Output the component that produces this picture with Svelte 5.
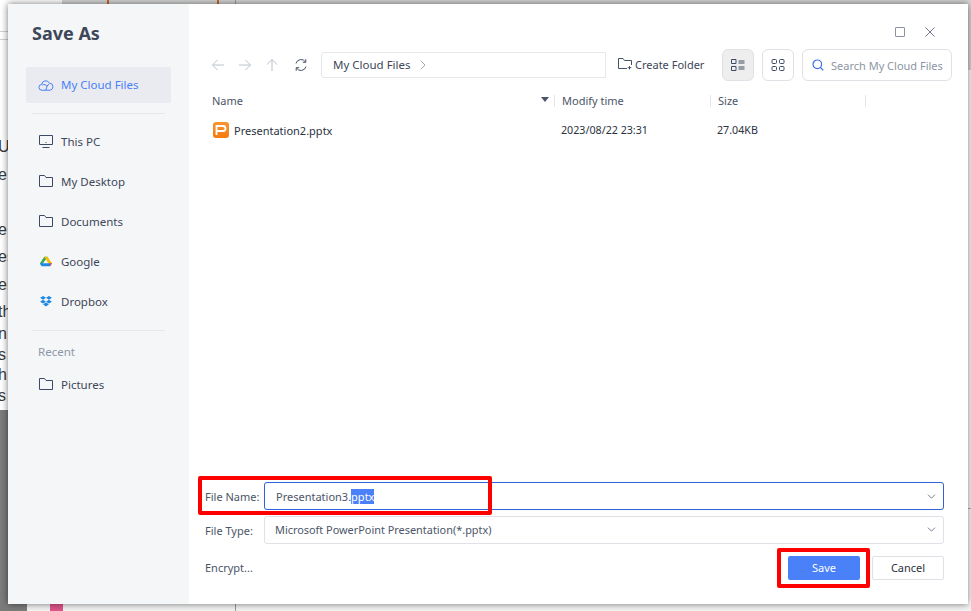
<script lang="ts">
    const behindLines = [
        { text: "Up", top: 138 },
        { text: "e", top: 166 },
        { text: "e", top: 221 },
        { text: "es", top: 248 },
        { text: "en", top: 276 },
        { text: "th", top: 303 },
        { text: "n.", top: 325 },
        { text: "s", top: 346 },
        { text: "h", top: 366 },
        { text: "s", top: 387 }
    ];

    const places = [
        { name: "This PC", icon: "pc" },
        { name: "My Desktop", icon: "folder" },
        { name: "Documents", icon: "folder" },
        { name: "Google", icon: "drive" },
        { name: "Dropbox", icon: "dropbox" }
    ];
</script>

{#snippet folderIcon()}
    <svg class="nav-icon" viewBox="0 0 16 14" aria-hidden="true">
        <path d="M1.5 1.5h5l1.500 2h6.500v9h-13z" fill="none" stroke="#3d4a66" />
    </svg>
{/snippet}

<div class="page">
    <div class="behind" aria-hidden="true">
        <div class="top-bar">
            <i class="tick tick-a"></i>
            <i class="tick tick-b"></i>
            <i class="top-rule"></i>
        </div>
        <div class="left-rule"></div>
        <div class="left-gray"></div>
        <div class="bottom-gray"></div>
        <div class="bottom-rule"></div>
        <div class="pink"></div>
        <div class="bottom-sep"></div>
        <div class="right-gray"></div>
        <div class="right-rule"></div>
        {#each behindLines as line}
            <span class="behind-text" style="top: {line.top}px">{line.text}</span>
        {/each}
    </div>

    <div class="dialog">
        <aside class="sidebar">
            <h1>Save As</h1>
            <div class="nav-item active">
                <svg class="nav-icon" viewBox="0 0 16 12" aria-hidden="true">
                    <path d="M4 11.200a2.900 2.900 0 0 1-.3-5.800 4 4 0 0 1 7.600-1.300 3.600 3.600 0 0 1 .9 7.100z" fill="none" stroke="#4a80f8" />
                    <path d="M4.300 6.200a2.900 2.900 0 0 1 4.600 1.200M8.900 7.400l-1 3.800M11.300 5.400a3 3 0 0 0-2.400 2" fill="none" stroke="#4a80f8" />
                </svg>
                <span>My Cloud Files</span>
            </div>
            <div class="divider first"></div>
            {#each places as place}
                <div class="nav-item">
                    {#if place.icon === "pc"}
                        <svg class="nav-icon" viewBox="0 0 16 14" aria-hidden="true">
                            <path d="M1.500 1.500h13v9h-13zM4.500 13.500h7M7.500 8.500h1" fill="none" stroke="#3d4a66" />
                        </svg>
                    {:else if place.icon === "folder"}
                        {@render folderIcon()}
                    {:else if place.icon === "drive"}
                        <svg class="brand" viewBox="0 0 14 12" aria-hidden="true">
                            <path d="M5 .5h4L3.500 8 1.500 11.500 0 8z" fill="#34a853" />
                            <path d="M5 .5h3.800L14 8H9.700z" fill="#fbbc04" />
                            <path d="M3 8h11l-2.300 3.600H2.200L0 8z" fill="#1e88e5" />
                            <path d="M11.700 11.600 14 8H11z" fill="#ea4335" />
                        </svg>
                    {:else}
                        <svg class="brand" viewBox="0 0 14 13" aria-hidden="true">
                            <path d="M3.500 0 7 2.200 3.500 4.500 0 2.200zM10.500 0 14 2.200l-3.500 2.300L7 2.200zM3.500 4.500 7 6.800 3.500 9 0 6.800zM10.500 4.500 14 6.800 10.500 9 7 6.800zM3.500 9.800 7 7.600l3.500 2.200L7 12.400z" fill="#1e88e5" />
                        </svg>
                    {/if}
                    <span>{place.name}</span>
                </div>
            {/each}
            <div class="divider second"></div>
            <div class="recent">Recent</div>
            <div class="nav-item">
                {@render folderIcon()}
                <span>Pictures</span>
            </div>
        </aside>

        <main class="content">
            <div class="titlebar">
                <svg class="win-icon" viewBox="0 0 10 10" aria-hidden="true">
                    <rect x="0.500" y="0.500" width="9" height="9" rx="0.500" fill="none" stroke="#8b93a3" />
                </svg>
                <svg class="win-icon" viewBox="0 0 10 10" aria-hidden="true">
                    <path d="M.5.5l9 9M9.500.5l-9 9" fill="none" stroke="#6f7888" />
                </svg>
            </div>

            <div class="toolbar">
                <div class="nav-buttons">
                    <svg viewBox="0 0 14 14" aria-hidden="true"><path d="M13 7H1.500M6.500 2l-5 5 5 5" fill="none" stroke="#bcc3cf" /></svg>
                    <svg viewBox="0 0 14 14" aria-hidden="true"><path d="M1 7h11.500M7.500 2l5 5-5 5" fill="none" stroke="#bcc3cf" /></svg>
                    <svg viewBox="0 0 14 14" aria-hidden="true"><path d="M7 13V1.500M2 6.500l5-5 5 5" fill="none" stroke="#bcc3cf" /></svg>
                    <svg class="refresh" viewBox="0 0 14 14" aria-hidden="true">
                        <path d="M2 5.500A5.200 5.200 0 0 1 11.500 4M12 8.500A5.200 5.200 0 0 1 2.500 10M11.800 1.200V4.300H8.800M2.200 12.800V9.700H5.200" fill="none" stroke="#475267" />
                    </svg>
                </div>
                <div class="path-box">
                    <span>My Cloud Files</span>
                    <svg viewBox="0 0 6 10" aria-hidden="true"><path d="M.8.8 5 5 .8 9.200" fill="none" stroke="#a2a9b6" /></svg>
                </div>
                <div class="create-folder">
                    <svg viewBox="0 0 14 12" aria-hidden="true">
                        <path d="M9 10.500H.5V.5h4.500l1.500 2h7v4.500M11.500 8v3.500M9.700 9.700h3.600" fill="none" stroke="#475267" />
                    </svg>
                    <span>Create Folder</span>
                </div>
                <div class="view-btn selected">
                    <svg viewBox="0 0 14 12" aria-hidden="true">
                        <path d="M.5.500h4.500v4h-4.500zM.5 7.500h4.500v4h-4.500zM7.500 2h6M7.500 4h6M7.500 8h6M7.500 10h6" fill="none" stroke="#3d4a66" />
                    </svg>
                </div>
                <div class="view-btn">
                    <svg viewBox="0 0 13 12" aria-hidden="true">
                        <rect x=".5" y=".5" width="4.500" height="4" rx="1" fill="none" stroke="#3d4a66" />
                        <rect x="8" y=".5" width="4.500" height="4" rx="1" fill="none" stroke="#3d4a66" />
                        <rect x=".5" y="7.500" width="4.500" height="4" rx="1" fill="none" stroke="#3d4a66" />
                        <rect x="8" y="7.500" width="4.500" height="4" rx="1" fill="none" stroke="#3d4a66" />
                    </svg>
                </div>
                <div class="search">
                    <svg viewBox="0 0 12 12" aria-hidden="true">
                        <circle cx="5.300" cy="5.300" r="4.300" fill="none" stroke="#3b71e8" stroke-width="1.200" />
                        <path d="M8.500 8.500 11.300 11.300" fill="none" stroke="#3b71e8" stroke-width="1.200" />
                    </svg>
                    <span>Search My Cloud Files</span>
                </div>
            </div>

            <div class="table">
                <div class="table-head">
                    <div class="col-name">Name<i class="sort"></i></div>
                    <div class="col">Modify time</div>
                    <div class="col">Size</div>
                </div>
                <div class="table-row">
                    <div class="file-name">
                        <span class="ppt-icon">
                            <svg viewBox="0 0 16 16" aria-hidden="true">
                                <path d="M3.500 13V4h6.500a2.500 2.500 0 0 1 0 5H3.500" fill="none" stroke="#fff" stroke-width="1.800" />
                            </svg>
                        </span>
                        Presentation2.pptx
                    </div>
                    <div class="cell">2023/08/22 23:31</div>
                    <div class="cell">27.04KB</div>
                </div>
            </div>

            <div class="form">
                <div class="form-row">
                    <span class="label">File Name:</span>
                    <div class="field focused">
                        <span class="name-value">Presentation3.<span class="selection">pptx</span></span>
                        <svg viewBox="0 0 10 6" aria-hidden="true"><path d="M.8.8 5 5 9.200.8" fill="none" stroke="#5b6579" /></svg>
                    </div>
                </div>
                <div class="form-row">
                    <span class="label">File Type:</span>
                    <div class="field type-field">
                        <span>Microsoft PowerPoint Presentation(*.pptx)</span>
                        <svg viewBox="0 0 10 6" aria-hidden="true"><path d="M.8.8 5 5 9.200.8" fill="none" stroke="#5b6579" /></svg>
                    </div>
                </div>
                <div class="actions">
                    <span class="label">Encrypt...</span>
                    <button class="save">Save</button>
                    <button class="cancel">Cancel</button>
                </div>
            </div>
        </main>
    </div>

    <div class="mark mark-name"></div>
    <div class="mark mark-save"></div>
</div>

<style>
    :global(body) {
        margin: 0;
        background: #fff;
    }

    .page {
        position: relative;
        width: 971px;
        height: 611px;
        box-sizing: border-box;
        padding: 4px 3px 7px 8px;
        overflow: hidden;
        font-family: "Noto Sans", sans-serif;
        color: #3d4759;
    }

    /* the app underneath the dialog */
    .behind {
        position: absolute;
        inset: 0;
    }

    .top-bar {
        position: absolute;
        left: 62px;
        right: 0;
        top: 0;
        height: 4px;
        background: #d4d4d4;
    }

    .tick {
        position: absolute;
        top: 0;
        width: 2px;
        height: 4px;
        background: #c8682c;
    }

    .tick-a {
        left: 45px;
    }

    .tick-b {
        left: 155px;
    }

    .top-rule {
        position: absolute;
        left: 173px;
        top: 0;
        width: 1px;
        height: 4px;
        background: #9a9a9a;
    }

    .left-rule {
        position: absolute;
        left: 0;
        top: 31px;
        width: 8px;
        height: 9px;
        box-sizing: border-box;
        border-top: 1px solid #d0d0d0;
        border-bottom: 1px solid #d0d0d0;
    }

    .left-gray {
        position: absolute;
        left: 0;
        top: 410px;
        width: 8px;
        height: 201px;
        background: #7c7c7c;
    }

    .bottom-gray {
        position: absolute;
        left: 8px;
        top: 604px;
        width: 19px;
        height: 7px;
        background: #7c7c7c;
    }

    .pink {
        position: absolute;
        left: 50px;
        top: 604px;
        width: 13px;
        height: 7px;
        background: #e0558a;
    }

    .bottom-rule {
        position: absolute;
        left: 27px;
        right: 0;
        top: 604px;
        height: 7px;
        background: #f4f4f4;
    }

    .bottom-sep {
        position: absolute;
        left: 235px;
        top: 604px;
        width: 1px;
        height: 7px;
        background: #9a9a9a;
    }

    .right-gray {
        position: absolute;
        left: 968px;
        top: 0;
        width: 3px;
        height: 70px;
        background: #d8d8d8;
    }

    .right-rule {
        position: absolute;
        left: 968px;
        top: 508px;
        width: 3px;
        height: 1px;
        background: #b8b8b8;
    }

    .behind-text {
        position: absolute;
        left: -2px;
        font-family: "Liberation Sans", sans-serif;
        font-size: 16px;
        line-height: 18px;
        color: #3a3a3a;
    }

    .dialog {
        position: relative;
        display: flex;
        height: 600px;
        background: #fff;
        box-shadow: 0 0 7px rgba(0, 0, 0, 0.55);
    }

    .sidebar {
        width: 181px;
        flex: none;
        box-sizing: border-box;
        padding: 0 18px;
        background: #f5f6f8;
    }

    h1 {
        margin: 0;
        padding: 16px 6px 0;
        height: 63px;
        box-sizing: border-box;
        font-size: 18px;
        line-height: 26px;
        font-weight: 700;
        color: #3d4759;
    }

    .nav-item {
        display: flex;
        align-items: center;
        gap: 7px;
        height: 40px;
        box-sizing: border-box;
        padding: 0 0 2px 12px;
        font-size: 11.5px;
        color: #3d4759;
    }

    .nav-item.active {
        height: 36px;
        padding-bottom: 1px;
        border-radius: 2px;
        background: #e9ebf0;
        color: #4a80f8;
    }

    .nav-icon {
        width: 16px;
        height: 14px;
        flex: none;
    }

    .brand {
        width: 12px;
        height: 11px;
        margin: 0 2px;
        flex: none;
    }

    .divider {
        margin: 0 6px;
        height: 1px;
        background: #e5e7ea;
    }

    .divider.first {
        margin-top: 10px;
        margin-bottom: 8px;
    }

    .divider.second {
        margin-top: 8px;
    }

    .recent {
        padding: 13px 0 0 12px;
        height: 21px;
        font-size: 11.5px;
        line-height: 16px;
        color: #8e97a8;
    }

    .content {
        flex: 1;
        min-width: 0;
        display: flex;
        flex-direction: column;
    }

    .titlebar {
        display: flex;
        justify-content: flex-end;
        align-items: center;
        gap: 20px;
        height: 45px;
        padding: 10px 33px 0 0;
        box-sizing: border-box;
    }

    .win-icon {
        width: 10px;
        height: 10px;
    }

    .toolbar {
        display: flex;
        align-items: center;
        height: 32px;
        padding-left: 22px;
        font-size: 11px;
    }

    .nav-buttons {
        display: flex;
        align-items: center;
        gap: 13px;
        width: 110px;
        flex: none;
    }

    .nav-buttons svg {
        width: 14px;
        height: 14px;
    }

    .nav-buttons .refresh {
        margin-left: 2px;
    }

    .path-box {
        display: flex;
        align-items: center;
        gap: 9px;
        width: 285px;
        height: 26px;
        box-sizing: border-box;
        padding: 0 0 2px 11px;
        flex: none;
        border: 1px solid #e6e8ec;
        border-radius: 3px 0 0 3px;
        font-size: 11.5px;
        color: #3d4759;
    }

    .path-box svg {
        width: 6px;
        height: 10px;
        margin-top: 1px;
    }

    .create-folder {
        display: flex;
        align-items: center;
        gap: 3px;
        margin-left: 12px;
        width: 104px;
        padding-bottom: 2px;
        box-sizing: border-box;
        flex: none;
    }

    .create-folder svg {
        width: 14px;
        height: 12px;
    }

    .view-btn {
        display: flex;
        align-items: center;
        justify-content: center;
        width: 32px;
        height: 32px;
        box-sizing: border-box;
        margin-right: 8px;
        flex: none;
        border: 1px solid #dfe1e6;
        border-radius: 6px;
    }

    .view-btn.selected {
        background: #eeeeee;
    }

    .view-btn svg {
        width: 14px;
        height: 12px;
    }

    .search {
        display: flex;
        align-items: center;
        gap: 7px;
        width: 150px;
        height: 32px;
        box-sizing: border-box;
        padding-left: 9px;
        flex: none;
        border: 1px solid #dfe1e6;
        border-radius: 6px;
        font-size: 11px;
        color: #8d95a3;
        white-space: nowrap;
    }

    .search svg {
        width: 12px;
        height: 12px;
        flex: none;
    }

    .table {
        flex: 1;
        padding: 13px 0 0 23px;
    }

    .table-head,
    .table-row {
        display: grid;
        grid-template-columns: 342px 156px 156px;
        width: 654px;
        font-size: 11px;
    }

    .table-head {
        height: 16px;
        align-items: start;
        color: #4b5568;
    }

    .col-name {
        position: relative;
        line-height: 14px;
    }

    .sort {
        position: absolute;
        right: 5px;
        top: 3px;
        border-left: 4px solid transparent;
        border-right: 4px solid transparent;
        border-top: 5px solid #4b5568;
    }

    .col {
        height: 12px;
        margin-top: 1px;
        line-height: 12px;
        padding-left: 7px;
        border-left: 1px solid #e3e5e9;
    }

    .table-head > .col:last-child {
        border-right: 1px solid #e3e5e9;
    }

    .table-row {
        align-items: center;
        height: 28px;
        margin-top: 6px;
        color: #2b3240;
    }

    .file-name {
        display: flex;
        align-items: center;
        gap: 5px;
        padding-left: 1px;
    }

    .ppt-icon {
        display: block;
        width: 16px;
        height: 16px;
        border-radius: 3px;
        background: linear-gradient(#f9962e, #f5790f);
    }

    .ppt-icon svg {
        display: block;
        width: 16px;
        height: 16px;
    }

    .cell {
        padding-left: 7px;
        font-size: 10.7px;
    }

    .form {
        padding: 0 24px 24px 16px;
        font-size: 11px;
    }

    .form-row {
        display: flex;
        align-items: center;
        margin-bottom: 6px;
    }

    .label {
        width: 59px;
        flex: none;
        color: #4b5568;
    }

    .field {
        flex: 1;
        display: flex;
        align-items: center;
        justify-content: space-between;
        height: 28px;
        box-sizing: border-box;
        padding: 0 7px 0 10px;
        border: 1px solid #dfe1e6;
        border-radius: 3px;
        color: #4b5568;
    }

    .field.focused {
        border-color: #2f63d8;
    }

    .type-field {
        padding-bottom: 2px;
        font-size: 10.9px;
    }

    .field svg {
        width: 9px;
        height: 5px;
    }

    .name-value {
        padding-left: 1px;
    }

    .selection {
        background: #4a80f8;
        color: #fff;
    }

    .actions {
        display: flex;
        align-items: center;
        height: 24px;
        margin-top: 12px;
    }

    .actions .label {
        flex: 1;
        padding-bottom: 2px;
    }

    button {
        width: 72px;
        height: 24px;
        padding: 0 0 2px;
        border-radius: 2px;
        font-family: inherit;
        font-size: 11px;
    }

    .save {
        border: none;
        background: #4a80f8;
        color: #fff;
    }

    .cancel {
        margin-left: 12px;
        border: 1px solid #dfe1e6;
        background: #fff;
        color: #2b3240;
    }

    /* red callouts drawn over the screenshot */
    .mark {
        position: absolute;
        box-sizing: border-box;
        border: 4px solid #f00;
        border-radius: 2px;
    }

    .mark-name {
        left: 198px;
        top: 476px;
        width: 294px;
        height: 39px;
    }

    .mark-save {
        left: 777px;
        top: 548px;
        width: 93px;
        height: 40px;
    }
</style>
